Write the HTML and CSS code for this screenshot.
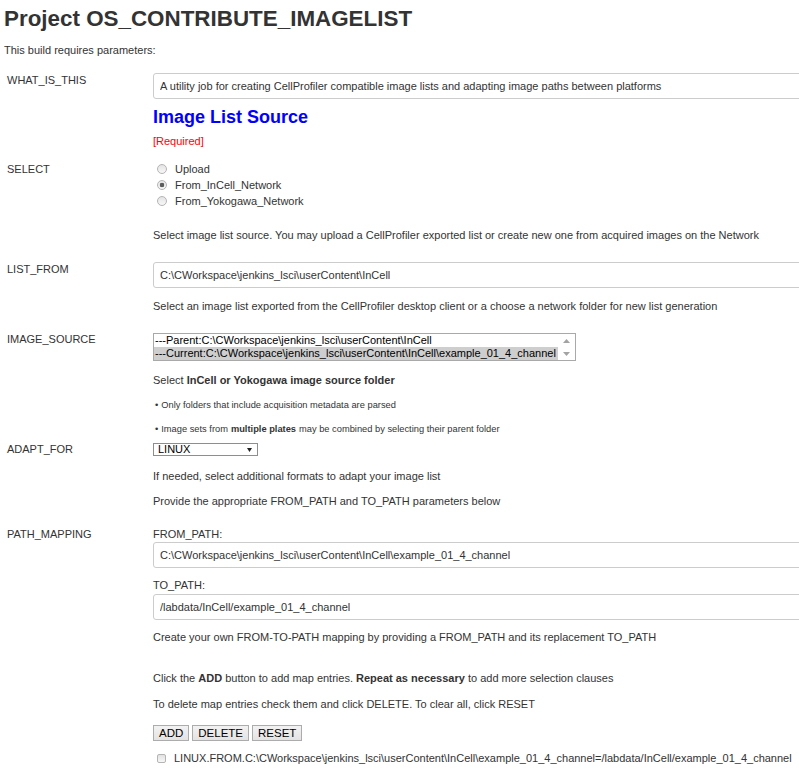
FILE: index.html
```html
<!DOCTYPE html>
<html lang="en">
<head>
<meta charset="utf-8">
<title>Project OS_CONTRIBUTE_IMAGELIST</title>
<link rel="stylesheet" href="styles.css">
</head>
<body>
<h1 class="title">Project OS_CONTRIBUTE_IMAGELIST</h1>
<p class="intro">This build requires parameters:</p>

<div class="params">
  <div class="param p-what">
    <div class="label">WHAT_IS_THIS</div>
    <div class="value">
      <input class="textbox" type="text" value="A utility job for creating CellProfiler compatible image lists and adapting image paths between platforms">
      <h2 class="section">Image List Source</h2>
      <div class="required">[Required]</div>
    </div>
  </div>

  <div class="param p-select">
    <div class="label lbl-select">SELECT</div>
    <div class="value">
      <label class="opt"><input class="radio" type="radio" name="src"><span>Upload</span></label>
      <label class="opt"><input class="radio" type="radio" name="src" checked><span>From_InCell_Network</span></label>
      <label class="opt"><input class="radio" type="radio" name="src"><span>From_Yokogawa_Network</span></label>
      <p class="desc d-after-radio">Select image list source. You may upload a CellProfiler exported list or create new one from acquired images on the Network</p>
    </div>
  </div>

  <div class="param p-list">
    <div class="label lbl-input">LIST_FROM</div>
    <div class="value">
      <input class="textbox" type="text" value="C:\CWorkspace\jenkins_lsci\userContent\InCell">
      <p class="desc d-after-input">Select an image list exported from the CellProfiler desktop client or a choose a network folder for new list generation</p>
    </div>
  </div>

  <div class="param p-source">
    <div class="label">IMAGE_SOURCE</div>
    <div class="value">
      <div class="listbox">
        <div class="options">
          <div class="option">---Parent:C:\CWorkspace\jenkins_lsci\userContent\InCell</div>
          <div class="option selected">---Current:C:\CWorkspace\jenkins_lsci\userContent\InCell\example_01_4_channel</div>
        </div>
        <div class="scrollbar">
          <svg width="7" height="4" viewBox="0 0 7 4"><path d="M0 4 L3.5 0 L7 4 Z" fill="#a3a3a3"/></svg>
          <svg width="7" height="4" viewBox="0 0 7 4"><path d="M0 0 L3.5 4 L7 0 Z" fill="#a3a3a3"/></svg>
        </div>
      </div>
      <p class="desc hint">Select <b>InCell or Yokogawa image source folder</b></p>
      <ul class="bullets">
        <li>Only folders that include acquisition metadata are parsed</li>
        <li>Image sets from <b>multiple plates</b> may be combined by selecting their parent folder</li>
      </ul>
    </div>
  </div>

  <div class="param p-adapt">
    <div class="label">ADAPT_FOR</div>
    <div class="value">
      <div class="dropdown">
        <span>LINUX</span>
        <svg width="5" height="4" viewBox="0 0 5 4"><path d="M0 0 L5 0 L2.5 4 Z" fill="#222"/></svg>
      </div>
      <p class="desc d-after-select">If needed, select additional formats to adapt your image list</p>
      <p class="desc d-next">Provide the appropriate FROM_PATH and TO_PATH parameters below</p>
    </div>
  </div>

  <div class="param p-path">
    <div class="label">PATH_MAPPING</div>
    <div class="value">
      <div class="field-title">FROM_PATH:</div>
      <input class="textbox tb-field" type="text" value="C:\CWorkspace\jenkins_lsci\userContent\InCell\example_01_4_channel">
      <div class="field-title ft-next">TO_PATH:</div>
      <input class="textbox tb-field" type="text" value="/labdata/InCell/example_01_4_channel">
      <p class="desc d-create">Create your own FROM-TO-PATH mapping by providing a FROM_PATH and its replacement TO_PATH</p>
      <p class="desc d-click">Click the <b>ADD</b> button to add map entries. <b>Repeat as necessary</b> to add more selection clauses</p>
      <p class="desc d-next">To delete map entries check them and click DELETE. To clear all, click RESET</p>
      <div class="buttons">
        <button class="btn" type="button">ADD</button>
        <button class="btn" type="button">DELETE</button>
        <button class="btn" type="button">RESET</button>
      </div>
      <label class="entry"><input class="check" type="checkbox"><span>LINUX.FROM.C:\CWorkspace\jenkins_lsci\userContent\InCell\example_01_4_channel=/labdata/InCell/example_01_4_channel</span></label>
    </div>
  </div>
</div>
</body>
</html>
```

FILE: styles.css
```css
html, body {
  margin: 0;
  background: #ffffff;
}

body {
  padding: 0 4px;
  font-family: "Liberation Sans", Arial, sans-serif;
  font-size: 11px;
  line-height: 13px;
  color: #333333;
  overflow: hidden;
}

.title {
  margin: 6px 0 0;
  font-size: 22.4px;
  line-height: 26px;
  font-weight: bold;
  color: #333333;
}

.intro {
  margin: 12px 0 0;
}

.params {
  display: flex;
  flex-direction: column;
}

.param {
  display: grid;
  grid-template-columns: 149px 1fr;
}

.label {
  padding-left: 3px;
  color: #333333;
}

.value {
  display: flex;
  flex-direction: column;
  align-items: flex-start;
  min-width: 0;
}

.p-what { margin-top: 16px; }
.p-what .label { padding-top: 1px; }

.textbox {
  display: block;
  box-sizing: border-box;
  width: 680px;
  height: 26px;
  margin: 0;
  padding: 0 6px;
  border: 1px solid #cccccc;
  border-radius: 3px;
  font-family: "Liberation Sans", Arial, sans-serif;
  font-size: 11px;
  color: #333333;
  background: #ffffff;
  outline: none;
}

.section {
  margin: 7px 0 7px;
  font-size: 18px;
  line-height: 22px;
  font-weight: bold;
  color: #0000ff;
}

.required {
  color: #ff0000;
}

.p-select { margin-top: 13px; }
.lbl-select { padding-top: 2px; }

.opt {
  display: flex;
  align-items: center;
  height: 16px;
}

.radio {
  appearance: none;
  -webkit-appearance: none;
  box-sizing: border-box;
  width: 10px;
  height: 10px;
  margin: 0 8px 0 4px;
  border: 1px solid #b4b4b4;
  border-radius: 50%;
  background: linear-gradient(#e4e4e4, #f7f7f7);
}

.radio:checked {
  background: radial-gradient(circle, #5c5c5c 0 2px, rgba(92,92,92,0) 2.6px), linear-gradient(#e4e4e4, #f7f7f7);
}

.desc {
  margin: 0;
}

.d-after-radio { margin-top: 20px; }

.p-list { margin-top: 20px; }
.lbl-input { padding-top: 1px; }
.d-after-input { margin-top: 12px; }

.p-source { margin-top: 20px; }

.listbox {
  display: inline-flex;
  border: 1px solid #a9a9a9;
  background: #ffffff;
}

.options {
  display: flex;
  flex-direction: column;
}

.option {
  height: 13px;
  line-height: 13px;
  padding: 0 2px 0 1px;
  color: #000000;
  white-space: nowrap;
}

.option.selected {
  background: #cecece;
}

.scrollbar {
  width: 17px;
  display: flex;
  flex-direction: column;
  justify-content: space-between;
  align-items: center;
  padding: 5px 0 4px;
  box-sizing: border-box;
  background: #ffffff;
}

.hint { margin-top: 13px; }
.hint b { color: #333333; }

.bullets {
  list-style: none;
  margin: 13px 0 0;
  padding: 0;
  font-size: 9.3px;
  line-height: 11px;
}

.bullets li {
  display: flex;
  gap: 3px;
  padding-left: 2px;
}

.bullets li + li { margin-top: 13px; }

.bullets li::before {
  content: "\2022";
}

.p-adapt { margin-top: 8px; }

.dropdown {
  box-sizing: border-box;
  width: 105px;
  height: 13px;
  display: flex;
  align-items: center;
  justify-content: space-between;
  padding: 0 5px 0 4px;
  border: 1px solid #8e8e8e;
  color: #000000;
  line-height: 11px;
  background: #ffffff;
}

.d-after-select { margin-top: 14px; }
.d-next { margin-top: 12px; }

.p-path { margin-top: 20px; }

.tb-field { margin-top: 1px; }
.ft-next { margin-top: 11px; }
.ft-next + .tb-field { margin-top: 2px; }

.d-create { margin-top: 11px; }
.d-click { margin-top: 28px; }
.d-click + .d-next { margin-top: 13px; }

.buttons {
  display: flex;
  gap: 3px;
  margin-top: 14px;
}

.btn {
  box-sizing: border-box;
  height: 16px;
  margin: 0;
  padding: 0 5px;
  border: 1px solid #acacac;
  border-radius: 0;
  background: linear-gradient(#f2f2f2, #e3e3e3);
  font-family: "Liberation Sans", Arial, sans-serif;
  font-size: 11.5px;
  line-height: 14px;
  color: #000000;
}

.entry {
  display: flex;
  align-items: center;
  margin-top: 11px;
  height: 13px;
  white-space: nowrap;
}

.check {
  appearance: none;
  -webkit-appearance: none;
  box-sizing: border-box;
  width: 9px;
  height: 9px;
  margin: 0 8px 0 4px;
  border: 1px solid #b4b4b4;
  border-radius: 2px;
  background: linear-gradient(#e2e2e2, #f7f7f7);
}
```
